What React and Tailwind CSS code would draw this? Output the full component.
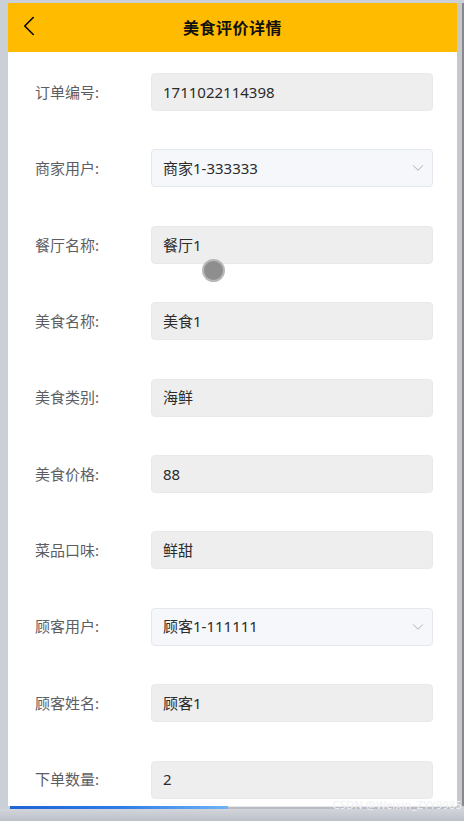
import { ChevronLeft, ChevronDown } from "lucide-react";

const fields = [
  { label: "订单编号:", value: "1711022114398" },
  { label: "商家用户:", value: "商家1-333333", select: true },
  { label: "餐厅名称:", value: "餐厅1" },
  { label: "美食名称:", value: "美食1" },
  { label: "美食类别:", value: "海鲜" },
  { label: "美食价格:", value: "88" },
  { label: "菜品口味:", value: "鲜甜" },
  { label: "顾客用户:", value: "顾客1-111111", select: true },
  { label: "顾客姓名:", value: "顾客1" },
  { label: "下单数量:", value: "2" },
];

export default function App() {
  return (
    <div
      className="relative w-[464px] h-[821px] overflow-hidden bg-[#cbcfd6] flex flex-col"
      style={{ fontFamily: '"Noto Sans", "Noto Sans CJK SC", sans-serif' }}
    >
      <div className="flex pl-[8px] pt-[3px] h-[806px]">
        {/* page */}
        <div className="w-[449px] h-full bg-white flex flex-col overflow-hidden">
          <div className="relative h-[49px] shrink-0 bg-[#ffbb00] flex items-center justify-center">
            <button className="absolute left-[4px] top-[6px] text-black">
              <ChevronLeft size={34} strokeWidth={1.1} />
            </button>
            <h1 className="text-[16px] font-bold text-[#111] tracking-[0.5px]">美食评价详情</h1>
          </div>

          <div className="flex flex-col gap-[38.4px] pt-[21px] pl-[27px] pr-[24px]">
            {fields.map((f) => (
              <div key={f.label} className="flex items-center">
                <span className="w-[116px] shrink-0 text-[15px] text-[#5c5e63]">{f.label}</span>
                <div
                  className={`flex-1 h-[38px] rounded-[4px] border flex items-center justify-between pl-[11px] pr-[5px] text-[15px] text-[#2b2b2b] ${
                    f.select ? "bg-[#f5f7fa] border-[#e4e7ed]" : "bg-[#eeeeee] border-[#e9e9e9]"
                  }`}
                >
                  <span>{f.value}</span>
                  {f.select && <ChevronDown size={18} strokeWidth={1.3} className="text-[#a8acb4]" />}
                </div>
              </div>
            ))}
          </div>
        </div>
        {/* scrollbar strip */}
        <div className="w-[5px] h-full bg-[#c6c8cd]" />
        <div className="w-[2px] h-full bg-[#87888e]" />
      </div>

      {/* bottom loading bar */}
      <div className="flex pl-[10px] pr-[8px] h-[3px]">
        <div className="w-[218px] h-full bg-gradient-to-r from-[#1f63d6] via-[#2e7be8] to-[#6fb2f5]" />
        <div className="flex-1 h-full bg-[#b9bcc2] border-t border-[#e6e8eb]" />
      </div>
      <div className="flex-1 bg-gradient-to-b from-[#d2d5db] to-[#bcc0c8]" />

      {/* touch indicator */}
      <div className="absolute left-[202px] top-[259px] w-[23px] h-[23px] rounded-full bg-[#8e8e8e] border-[2px] border-[#b8b8b8]" />

      <span className="absolute right-[2px] top-[799px] text-[11px] leading-none text-[#eef0f3] tracking-[0.2px]">
        CSDN @Weixin_ZYY9985
      </span>
    </div>
  );
}
